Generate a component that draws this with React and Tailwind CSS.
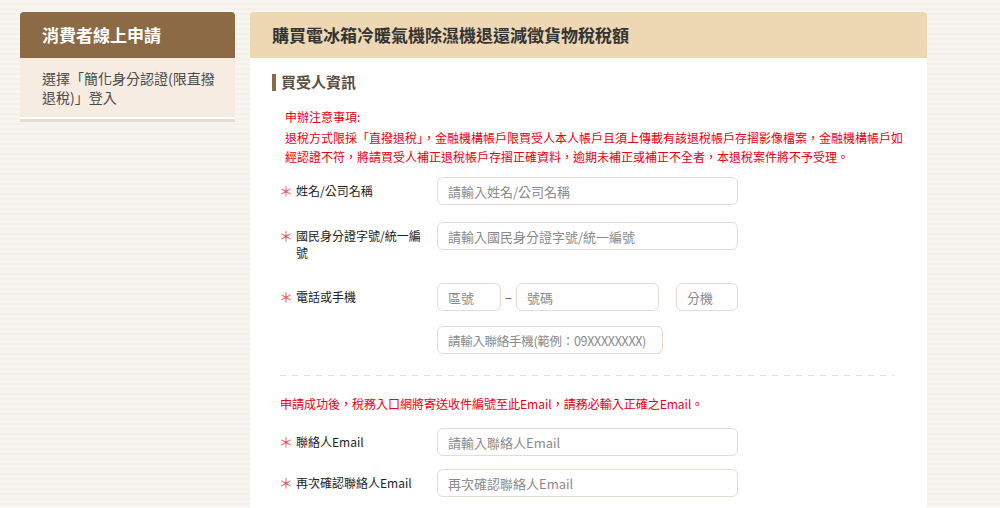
import React from 'react';

const FONT = "font-['Noto_Sans_CJK_TC','Noto_Sans',sans-serif]";

const Field = ({ label, placeholder, className = '' }) => {
  return (
    <div className={`flex items-start ${className}`}>
      <Label text={label} />
      <input
        type="text"
        placeholder={placeholder}
        className="w-[301px] h-[28px] rounded-[6px] border border-[#e6dccf] bg-white px-[10px] text-[13px] text-[#333] placeholder:text-[#8a8a8a] outline-none"
      />
    </div>
  );
};

const Label = ({ text }) => {
  return (
    <div className="w-[158px] shrink-0 flex items-start pt-[5px]">
      <span className="w-[13px] text-[14px] leading-[17px] text-center text-[#e8584a]">＊</span>
      <span className="ml-[4px] w-[130px] text-[12px] leading-[17px] text-[#222]">{text}</span>
    </div>
  );
};

const Sidebar = () => {
  return (
    <div className="w-[215px] shrink-0">
      <div className="h-[46px] rounded-t-[4px] bg-[#8c6a45] flex items-center pl-[22px] text-[17px] font-bold text-white">
        消費者線上申請
      </div>
      <div className="bg-[#f7ece2] pl-[22px] pr-[10px] pt-[11px] pb-[10px] text-[14px] leading-[19px] text-[#4a4a4a] border-b-2 border-white shadow-[0_3px_0_#e4dbd1]">
        選擇「簡化身分認證(限直撥<br />退稅)」登入
      </div>
    </div>
  );
};

export default function App() {
  return (
    <div className={`${FONT} min-h-[508px] h-[508px] overflow-hidden bg-[repeating-linear-gradient(180deg,#f8f5f0_0px,#f8f5f0_3px,#f4f0ea_3px,#f4f0ea_5px)]`}>
      <div className="flex gap-[15px] pl-[20px] pt-[12px]">
        <Sidebar />
        <div className="w-[677px] shrink-0">
          <div className="h-[46px] rounded-t-[4px] bg-[#eed7b3] flex items-center pl-[22px] text-[17px] font-bold text-[#333]">
            購買電冰箱冷暖氣機除濕機退還減徵貨物稅稅額
          </div>
          <div className="bg-white pl-[22px] pr-[18px] pt-[14px] pb-[40px] min-h-[460px]">
            <div className="flex items-center h-[20px]">
              <span className="w-[4px] h-[17px] bg-[#8c6a45]" />
              <span className="ml-[5px] text-[15px] font-bold text-[#5b4d40]">買受人資訊</span>
            </div>

            <div className="mt-[15px] pl-[13px] text-[12px] text-[#e60012]">
              <div className="leading-[20px]">申辦注意事項:</div>
              <p className="mt-[1px] leading-[19px]">
                退稅方式限採「直撥退稅」，金融機構帳戶限買受人本人帳戶且須上傳載有該退稅帳戶存摺影像檔案，金融機構帳戶如經認證不符，將請買受人補正退稅帳戶存摺正確資料，逾期未補正或補正不全者，本退稅案件將不予受理。
              </p>
            </div>

            <div className="pl-[7px]">
              <Field className="mt-[11px]" label="姓名/公司名稱" placeholder="請輸入姓名/公司名稱" />
              <Field className="mt-[17px]" label="國民身分證字號/統一編號" placeholder="請輸入國民身分證字號/統一編號" />

              <div className="mt-[22px] flex items-start">
                <Label text="電話或手機" />
                <div>
                  <div className="flex items-center">
                    <input type="text" placeholder="區號" className="w-[64px] h-[28px] rounded-[6px] border border-[#e6dccf] px-[10px] text-[13px] placeholder:text-[#8a8a8a] outline-none" />
                    <span className="w-[15px] text-center text-[13px] text-[#555]">–</span>
                    <input type="text" placeholder="號碼" className="w-[143px] h-[28px] rounded-[6px] border border-[#e6dccf] px-[10px] text-[13px] placeholder:text-[#8a8a8a] outline-none" />
                    <input type="text" placeholder="分機" className="ml-[17px] w-[62px] h-[28px] rounded-[6px] border border-[#e6dccf] px-[10px] text-[13px] placeholder:text-[#8a8a8a] outline-none" />
                  </div>
                  <input type="text" placeholder="請輸入聯絡手機(範例：09XXXXXXXX)" className="mt-[15px] w-[226px] h-[28px] rounded-[6px] border border-[#e6dccf] pl-[10px] pr-[2px] text-[12.5px] tracking-[-0.3px] placeholder:text-[#8a8a8a] outline-none" />
                </div>
              </div>
            </div>

            <div className="mt-[21px] ml-[8px] w-[614px] h-px bg-[linear-gradient(to_right,#dcdcdc_0,#dcdcdc_6px,transparent_6px,transparent_12px)] bg-[length:12px_1px]" />

            <div className="mt-[18px] ml-[8px] text-[12px] leading-[20px] text-[#e60012]">
              申請成功後，稅務入口網將寄送收件編號至此Email，請務必輸入正確之Email。
            </div>

            <div className="pl-[7px]">
              <Field className="mt-[14px]" label="聯絡人Email" placeholder="請輸入聯絡人Email" />
              <Field className="mt-[13px]" label="再次確認聯絡人Email" placeholder="再次確認聯絡人Email" />
            </div>
          </div>
        </div>
      </div>
    </div>
  );
}
